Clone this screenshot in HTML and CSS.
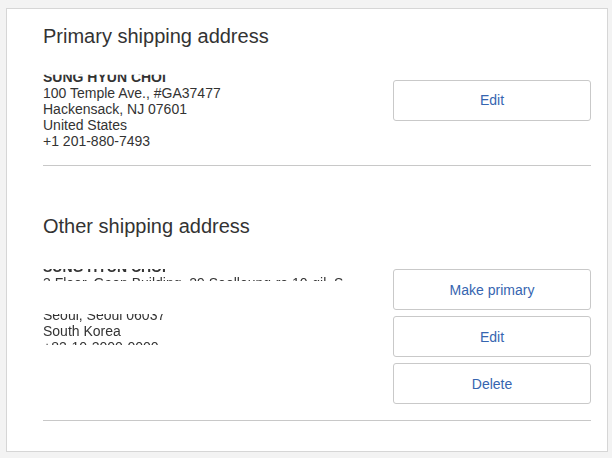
FILE: index.html
```html
<!DOCTYPE html>
<html lang="en">
<head>
<meta charset="utf-8">
<title>Shipping addresses</title>
<link rel="stylesheet" href="styles.css">
</head>
<body>
<div class="page">
  <div class="card">
    <section class="section">
      <h2 class="heading">Primary shipping address</h2>
      <div class="entry">
        <div class="address address--primary">
          <div class="name">Sung Hyun Choi</div>
          <div>100 Temple Ave., #GA37477</div>
          <div>Hackensack, NJ 07601</div>
          <div>United States</div>
          <div>+1 201-880-7493</div>
        </div>
        <div class="actions">
          <button class="btn" type="button">Edit</button>
        </div>
      </div>
      <hr class="divider">
    </section>
    <section class="section section--other">
      <h2 class="heading">Other shipping address</h2>
      <div class="entry">
        <div class="address address--other">
          <div class="name">Sung Hyun Choi</div>
          <div>3 Floor, Gaon Building, 29 Seolleung-ro 10-gil, S</div>
          <div>eocho-gu</div>
          <div>Seoul, Seoul 06037</div>
          <div>South Korea</div>
          <div>+82-10-2000-0000</div>
        </div>
        <div class="actions">
          <button class="btn" type="button">Make primary</button>
          <button class="btn" type="button">Edit</button>
          <button class="btn" type="button">Delete</button>
        </div>
      </div>
      <hr class="divider">
    </section>
  </div>
</div>
</body>
</html>
```
FILE: styles.css
```css
html, body {
  margin: 0;
  background: #f3f3f3;
}
body {
  font-family: "Liberation Sans", Arial, sans-serif;
  color: #333;
}
.page {
  padding: 8px 0 0 6px;
}
.card {
  box-sizing: border-box;
  width: 602px;
  height: 444px;
  background: #fff;
  border: 1px solid #d6d6d6;
  padding: 15px 16px 0 36px;
}
.heading {
  margin: 0 0 21px;
  font-size: 20px;
  line-height: 24px;
  font-weight: normal;
  color: #333;
}
.section--other .heading {
  margin-top: 48px;
}
.entry {
  display: flex;
  justify-content: space-between;
  align-items: flex-start;
}
.address {
  font-size: 14px;
  line-height: 16px;
  color: #333;
  white-space: nowrap;
}
.address .name {
  font-weight: bold;
  text-transform: uppercase;
}
.address--primary {
  clip-path: inset(5.7px 0 0 0);
}
.address--other {
  -webkit-mask-image: linear-gradient(to bottom, transparent 0, transparent 9.7px, #000 9.7px, #000 22px, transparent 22px, transparent 55.3px, #000 55.3px, #000 86.5px, transparent 86.5px);
  mask-image: linear-gradient(to bottom, transparent 0, transparent 9.7px, #000 9.7px, #000 22px, transparent 22px, transparent 55.3px, #000 55.3px, #000 86.5px, transparent 86.5px);
}
.actions {
  flex: 0 0 198px;
  width: 198px;
  margin-top: 10.5px;
  display: flex;
  flex-direction: column;
  gap: 6px;
}
.btn {
  box-sizing: border-box;
  height: 41px;
  width: 100%;
  margin: 0;
  padding: 0;
  border: 1px solid #c9c9c9;
  border-radius: 3px;
  background: #fff;
  color: #3665b0;
  font-family: "Liberation Sans", Arial, sans-serif;
  font-size: 14px;
  cursor: pointer;
}
.divider {
  border: 0;
  border-top: 1px solid #c8c8c8;
  height: 0;
  margin: 15.5px 0 0;
}
.section--other .divider {
  margin-top: 16px;
}
```
